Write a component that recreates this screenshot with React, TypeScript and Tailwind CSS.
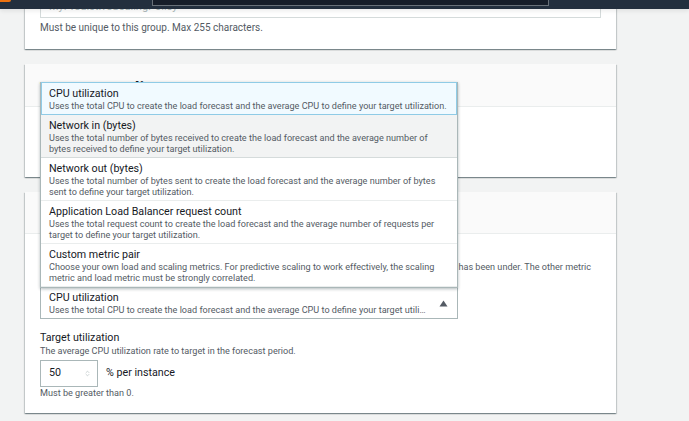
import { ChevronsUpDown } from 'lucide-react';

const options = [
  {
    title: 'CPU utilization',
    desc: 'Uses the total CPU to create the load forecast and the average CPU to define your target utilization.',
    state: 'selected',
  },
  {
    title: 'Network in (bytes)',
    desc: 'Uses the total number of bytes received to create the load forecast and the average number of bytes received to define your target utilization.',
    state: 'hover',
  },
  {
    title: 'Network out (bytes)',
    desc: 'Uses the total number of bytes sent to create the load forecast and the average number of bytes sent to define your target utilization.',
    state: '',
  },
  {
    title: 'Application Load Balancer request count',
    desc: 'Uses the total request count to create the load forecast and the average number of requests per target to define your target utilization.',
    state: '',
  },
  {
    title: 'Custom metric pair',
    desc: 'Choose your own load and scaling metrics. For predictive scaling to work effectively, the scaling metric and load metric must be strongly correlated.',
    state: '',
  },
];

const card = 'bg-white shadow-[0_1px_1px_0_rgba(0,28,36,0.3),1px_1px_1px_0_rgba(0,28,36,0.15),-1px_1px_1px_0_rgba(0,28,36,0.15)]';

export default function App() {
  return (
    <div className="relative w-[689px] h-[421px] overflow-hidden bg-[#f2f3f3] font-['Roboto',sans-serif] text-[#16191f]">
      {/* console header, pinned */}
      <div className="relative z-10 h-[9px] bg-[#232f3e] shadow-[0_2px_4px_rgba(0,0,0,0.08)]">
        <div className="absolute left-0 top-0 w-[11px] h-[2px] bg-[#ec7211] rounded-br" />
        <div className="absolute left-[152px] top-0 w-[397px] h-[6px] bg-[#161d29] border border-t-0 border-[#687078]" />
      </div>

      <div className="w-[591px] ml-[25px] flex flex-col gap-[15px]">
        {/* policy name */}
        <div className={`${card} -mt-[40px] px-[15px] pt-[20px] pb-[14px]`}>
          <div className="h-[29px] border border-[#d5dbdb] px-[8px] flex items-end pb-[2px] text-[11px] text-[#aab7b8]">
            MyPredictiveScalingPolicy
          </div>
          <p className="mt-[3px] text-[10px] leading-[14px] text-[#545b64]">Must be unique to this group. Max 255 characters.</p>
        </div>

        {/* scaling mode */}
        <div className={`${card} h-[113px]`}>
          <div className="h-[43px] bg-[#fafafa] border-b border-[#eaeded] px-[15px] pt-[14px] text-[18px] font-bold leading-[22px]">
            Turn on scaling
          </div>
        </div>

        {/* metrics */}
        <div className={`${card}`}>
          <div className="h-[42px] bg-[#fafafa] border-b border-[#eaeded] px-[15px] pt-[13px] text-[18px] font-bold leading-[22px]">
            Metrics and target utilization
          </div>
          <div className="px-[15px] pt-[27px] pb-[14px]">
            <p className="text-[9.1px] leading-[12px] text-[#545b64] whitespace-nowrap">
              Choose a load metric to forecast the load and a scaling metric that represents the utilization your group has been under. The other metric
              <br />is used to set capacity.
            </p>
            <div className="mt-[2px] w-[418px] h-[32px] border border-[#aab7b8] pl-[8px] pr-[9px] flex items-center">
              <div className="flex-1 min-w-0">
                <div className="text-[10.7px] leading-[13px]">CPU utilization</div>
                <div className="text-[9.1px] leading-[12px] text-[#545b64] truncate">
                  Uses the total CPU to create the load forecast and the average CPU to define your target utilization.
                </div>
              </div>
              <svg width="9" height="7" viewBox="0 0 9 7" className="ml-[10px] shrink-0">
                <path d="M4.5 0.5 L8.5 6.5 H0.5 Z" fill="#545b64" />
              </svg>
            </div>

            <div className="mt-[12px] text-[10.7px] leading-[14px]">Target utilization</div>
            <div className="text-[9.1px] leading-[12px] text-[#545b64]">The average CPU utilization rate to target in the forecast period.</div>
            <div className="mt-[3px] flex items-center gap-[8px]">
              <div className="w-[58px] h-[27px] border border-[#aab7b8] pl-[8px] pr-[6px] flex items-center justify-between text-[10.7px]">
                <span>50</span>
                <ChevronsUpDown size={7} className="text-[#aab7b8]" />
              </div>
              <span className="text-[10.7px]">% per instance</span>
            </div>
            <p className="mt-[0px] text-[9.1px] leading-[12px] text-[#545b64]">Must be greater than 0.</p>
          </div>
        </div>
      </div>

      {/* open metric dropdown */}
      <ul className="absolute z-20 left-[40px] top-[82px] w-[418px] bg-white border border-[#aab7b8] border-t-0 shadow-[0_1px_3px_rgba(0,28,36,0.3)]">
        {options.map((o) => (
          <li
            key={o.title}
            className={
              o.state === 'selected'
                ? 'px-[7px] pt-[4px] pb-[2px] bg-[#f1faff] border border-[#8fcbe6]'
                : o.state === 'hover'
                  ? 'px-[8px] pt-[4px] pb-[2px] bg-[#f2f3f3] border-b border-[#d5dbdb]'
                  : 'px-[8px] pt-[4px] pb-[2px] border-b border-[#eaeded]'
            }
          >
            <div className="text-[10.7px] leading-[14px]">{o.title}</div>
            <div className="text-[9.1px] leading-[11px] text-[#545b64]">{o.desc}</div>
          </li>
        ))}
      </ul>
    </div>
  );
}
